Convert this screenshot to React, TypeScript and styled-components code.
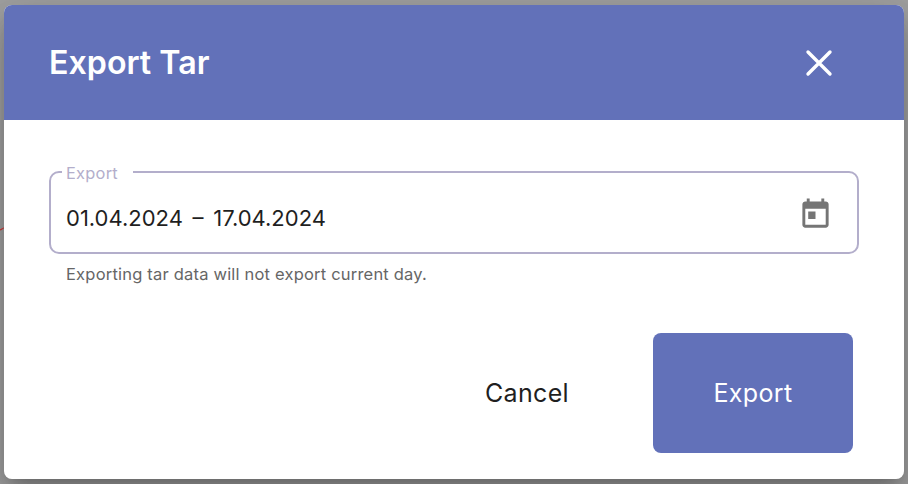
import React from "react";
import styled, { createGlobalStyle } from "styled-components";

const Global = createGlobalStyle`
  html, body { margin: 0; padding: 0; width: 908px; height: 484px; overflow: hidden; }
  #root { width: 908px; height: 484px; }
  * { box-sizing: border-box; }
`;

const Backdrop = styled.div`
  position: relative;
  width: 908px;
  height: 484px;
  padding: 5px 4px;
  overflow: hidden;
  background: #a1a1a1;
  font-family: Inter, "Liberation Sans", sans-serif;
`;

const ChartTrace = styled.svg`
  position: absolute;
  left: 0;
  top: 222px;
  width: 4px;
  height: 12px;
  fill: none;
  stroke: #b03030;
  stroke-width: 1.2;
`;

const Dialog = styled.div`
  position: relative;
  width: 900px;
  height: 474px;
  display: flex;
  flex-direction: column;
  border-radius: 8px;
  overflow: hidden;
  background: #ffffff;
`;

const DialogShadow = styled.div`
  border-radius: 8px;
  box-shadow: 0 11px 15px -7px rgba(0, 0, 0, 0.2), 0 24px 38px 3px rgba(0, 0, 0, 0.14), 0 9px 46px 8px rgba(0, 0, 0, 0.12);
`;

const Header = styled.header`
  height: 115px;
  flex: none;
  display: flex;
  align-items: center;
  justify-content: space-between;
  padding: 0 70px 0 45px;
  background: #6271b9;
  color: #ffffff;
`;

const Title = styled.h2`
  margin: 0;
  font-size: 32.2px;
  line-height: 38px;
  font-weight: 600;
`;

const CloseButton = styled.button`
  display: flex;
  width: 30px;
  height: 30px;
  padding: 0;
  border: 0;
  background: transparent;
  color: #ffffff;
`;

const Body = styled.div`
  flex: 1;
  display: flex;
  flex-direction: column;
  padding: 40px 45px 26px;
`;

const Field = styled.fieldset`
  margin: 0;
  width: 810px;
  height: 94px;
  padding: 0 24px 0 11px;
  display: flex;
  align-items: flex-start;
  justify-content: space-between;
  border: 2px solid #b3aecb;
  border-radius: 10px;
`;

const FieldLabel = styled.legend`
  padding: 4px 0 0 4px;
  width: 71px;
  font-size: 16.4px;
  line-height: 19px;
  letter-spacing: 0.25px;
  color: #b3aecb;
`;

const Value = styled.span`
  margin: 21px 0 0 4px;
  font-size: 22px;
  line-height: 28px;
  word-spacing: 3.5px;
  color: #1f1f1f;
`;

const CalendarIcon = styled.svg`
  width: 35px;
  height: 35px;
  margin-top: 14px;
  fill: #757575;
`;

const Helper = styled.p`
  margin: 10px 0 0 17px;
  font-size: 16.5px;
  line-height: 20px;
  letter-spacing: 0.2px;
  color: #666666;
`;

const Actions = styled.div`
  margin-top: auto;
  display: flex;
  align-items: center;
  justify-content: flex-end;
  gap: 84px;
  padding-right: 6px;
`;

const CancelButton = styled.button`
  padding: 0;
  border: 0;
  background: transparent;
  font: 400 25px/30px Inter, "Liberation Sans", sans-serif;
  letter-spacing: 0.35px;
  color: #1f1f1f;
`;

const ExportButton = styled.button`
  width: 200px;
  height: 120px;
  padding: 0;
  border: 0;
  border-radius: 8px;
  background: #6271b9;
  font: 400 25px/30px Inter, "Liberation Sans", sans-serif;
  letter-spacing: 0.35px;
  color: #ffffff;
`;

export default function App() {
  return (
    <Backdrop>
      <Global />
      <ChartTrace viewBox="0 0 4 12">
        <path d="M0 8 C2 7 3 6 4 6" />
      </ChartTrace>
      <DialogShadow>
        <Dialog>
          <Header>
            <Title>Export Tar</Title>
            <CloseButton aria-label="Close">
              <svg width="30" height="30" viewBox="0 0 30 30" fill="none" stroke="currentColor" strokeWidth="3.4" strokeLinecap="round">
                <path d="M4 4 26 26M26 4 4 26" />
              </svg>
            </CloseButton>
          </Header>
          <Body>
            <Field>
              <FieldLabel>Export</FieldLabel>
              <Value>01.04.2024 – 17.04.2024</Value>
              <CalendarIcon viewBox="0 0 24 24">
                <path d="M19 3h-1V1h-2v2H8V1H6v2H5c-1.11 0-1.99.9-1.99 2L3 19c0 1.1.89 2 2 2h14c1.1 0 2-.9 2-2V5c0-1.1-.9-2-2-2zm0 16H5V8h14v11zM7 10h5v5H7z" />
              </CalendarIcon>
            </Field>
            <Helper>Exporting tar data will not export current day.</Helper>
            <Actions>
              <CancelButton>Cancel</CancelButton>
              <ExportButton>Export</ExportButton>
            </Actions>
          </Body>
        </Dialog>
      </DialogShadow>
    </Backdrop>
  );
}
